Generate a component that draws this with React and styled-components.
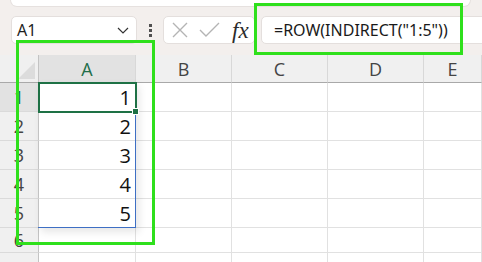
import React from "react";
import styled, { createGlobalStyle } from "styled-components";

const Global = createGlobalStyle`
  html, body { margin: 0; padding: 0; background: #f3efed; overflow: hidden; }
  #root { width: 482px; height: 262px; }
`;

const Page = styled.div`
  position: relative;
  width: 482px;
  height: 262px;
  overflow: hidden;
  background: #f3efed;
  font-family: "Open Sans", "Noto Sans", sans-serif;
`;

const Toolbar = styled.div`
  height: 55px;
  display: flex;
  flex-direction: column;
  background: #f3efed;
`;

const RibbonEdge = styled.div`
  height: 6px;
  margin: 0 12px 0 11px;
  background: #ffffff;
  border-radius: 0 0 7px 7px;
  box-shadow: 0 0 0 1px #e6e1df;
`;

const BarRow = styled.div`
  margin-top: 10px;
  display: flex;
  align-items: center;
  height: 28px;
  padding-left: 11px;
`;

const Box = styled.div`
  height: 28px;
  box-sizing: border-box;
  background: #ffffff;
  border: 1px solid #e4dfdd;
  border-radius: 5px;
  display: flex;
  align-items: center;
`;

const NameBox = styled(Box)`
  width: 126px;
  padding: 0 7px 0 5px;
  justify-content: space-between;
  font-family: "Noto Sans", "Open Sans", sans-serif;
  font-size: 16px;
  color: #1f1f1f;
`;

const Dots = styled.div`
  width: 26px;
  display: flex;
  flex-direction: column;
  align-items: center;
  gap: 2px;
  span {
    width: 3px;
    height: 3px;
    background: #505050;
  }
`;

const FxBox = styled(Box)`
  width: 92px;
  padding-left: 8px;
  gap: 11px;
`;

const Fx = styled.span`
  font-family: "Liberation Serif", "DejaVu Serif", serif;
  font-style: italic;
  font-size: 23px;
  color: #2b2b2b;
  margin-left: 1px;
  line-height: 1;
`;

const FormulaBox = styled(Box)`
  margin-left: 6px;
  flex: 1;
  margin-right: -20px;
  padding-left: 12px;
  font-family: "Noto Sans", "Open Sans", sans-serif;
  font-size: 16px;
  color: #1a1a1a;
`;

const Grid = styled.div`
  display: grid;
  grid-template-columns: 39px 97px 96px 96px 96px 1fr;
  grid-template-rows: 28px 29px 29px 29px 29px 29px 25px 29px;
  background: #ffffff;
`;

const Cell = styled.div`
  box-sizing: border-box;
  border-right: 1px solid #e1e1e1;
  border-bottom: 1px solid #e1e1e1;
  background: #ffffff;
  display: flex;
  align-items: center;
  justify-content: flex-end;
  padding-right: 4px;
  padding-top: 1px;
  font-family: "Open Sans", "Noto Sans", sans-serif;
  font-size: 20px;
  color: #111;
`;

const ColHead = styled.div`
  box-sizing: border-box;
  background: ${(p) => (p.$active ? "#e2e2e2" : "#f0f0f0")};
  border-right: 1px solid #d8d8d8;
  border-bottom: 1px solid #a9a9a9;
  display: flex;
  align-items: center;
  justify-content: center;
  font-family: "Open Sans", "Noto Sans", sans-serif;
  font-size: 18px;
  color: ${(p) => (p.$active ? "#1f6e4a" : "#444")};
`;

const Corner = styled(ColHead)`
  position: relative;
  border-right: 1px solid #c3c3c3;
  &::after {
    content: "";
    position: absolute;
    right: 3px;
    bottom: 3px;
    width: 0;
    height: 0;
    border-left: 17px solid transparent;
    border-bottom: 17px solid #dcdcdc;
  }
`;

const RowHead = styled.div`
  box-sizing: border-box;
  background: ${(p) => (p.$active ? "#e2e2e2" : "#f0f0f0")};
  border-right: 1px solid #c3c3c3;
  border-bottom: 1px solid #dadada;
  display: flex;
  align-items: center;
  justify-content: center;
  font-family: "Open Sans", "Noto Sans", sans-serif;
  font-size: 18px;
  color: ${(p) => (p.$active ? "#1f6e4a" : "#444")};
`;

const Spill = styled.div`
  position: absolute;
  left: 38px;
  top: 82px;
  width: 98px;
  height: 146px;
  box-sizing: border-box;
  border-right: 1px solid #3e6fc4;
  border-bottom: 1px solid #3e6fc4;
  box-shadow: 3px 4px 8px rgba(0, 0, 0, 0.1);
  pointer-events: none;
`;

const Active = styled.div`
  position: absolute;
  left: 38px;
  top: 82px;
  width: 99px;
  height: 31px;
  box-sizing: border-box;
  border: 2px solid #1e7145;
  pointer-events: none;
`;

const Handle = styled.div`
  position: absolute;
  left: 132px;
  top: 108px;
  width: 5px;
  height: 5px;
  background: #1e7145;
  border: 1px solid #ffffff;
`;

const Highlight = styled.div`
  position: absolute;
  box-sizing: border-box;
  border: 3px solid #2fe01c;
  pointer-events: none;
`;

const cols = ["A", "B", "C", "D", "E"];
const rows = [1, 2, 3, 4, 5, 6, 7];

export default function App() {
  return (
    <Page>
      <Global />
      <Toolbar>
        <RibbonEdge />
        <BarRow>
          <NameBox>
            <span>A1</span>
            <svg width="12" height="7" viewBox="0 0 12 7">
              <path d="M1 1 L6 6 L11 1" fill="none" stroke="#333" strokeWidth="1.2" />
            </svg>
          </NameBox>
          <Dots>
            <span />
            <span />
            <span />
          </Dots>
          <FxBox>
            <svg width="16" height="16" viewBox="0 0 16 16">
              <path d="M1 1 L15 15 M15 1 L1 15" stroke="#b4b4b4" strokeWidth="1.4" />
            </svg>
            <svg width="21" height="16" viewBox="0 0 21 16">
              <path d="M1 8 L7 14 L20 1" fill="none" stroke="#b4b4b4" strokeWidth="1.4" />
            </svg>
            <Fx>fx</Fx>
          </FxBox>
          <FormulaBox>=ROW(INDIRECT("1:5"))</FormulaBox>
        </BarRow>
      </Toolbar>
      <Grid>
        <Corner />
        {cols.map((c) => (
          <ColHead key={c} $active={c === "A"}>
            {c}
          </ColHead>
        ))}
        {rows.map((r) => (
          <React.Fragment key={r}>
            <RowHead $active={r === 1}>{r <= 6 ? r : ""}</RowHead>
            {cols.map((c) => (
              <Cell key={c}>{c === "A" && r <= 5 ? r : ""}</Cell>
            ))}
          </React.Fragment>
        ))}
      </Grid>
      <Spill />
      <Active />
      <Handle />
      <Highlight style={{ left: 254, top: 3, width: 209, height: 52 }} />
      <Highlight style={{ left: 16, top: 40, width: 139, height: 205 }} />
    </Page>
  );
}
